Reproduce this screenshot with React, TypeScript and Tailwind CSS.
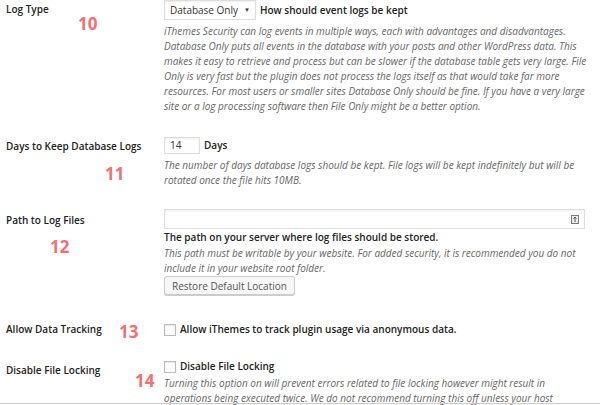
import React from 'react';

const font = { fontFamily: '"Open Sans", "Noto Sans", sans-serif' };

const Mark: React.FC<{ n: string; className: string }> = ({ n, className }) => (
  <span className={`absolute text-[17px] font-bold leading-none text-[#f36f73] ${className}`}>{n}</span>
);

const Row: React.FC<{ label: string; className?: string; children: React.ReactNode }> = ({ label, className = '', children }) => (
  <div className={`flex ${className}`}>
    <div className="w-[164px] shrink-0 pl-[6px] text-[10px] font-semibold leading-[15px] text-[#222]">{label}</div>
    <div className="flex-1 pr-[12px]">{children}</div>
  </div>
);

const Desc: React.FC<{ children: React.ReactNode }> = ({ children }) => (
  <p className="text-[10px] italic leading-[15px] text-[#666]">{children}</p>
);

const Check = () => <span className="mr-[4px] inline-block h-[12px] w-[12px] shrink-0 border border-[#bbb] bg-white shadow-[inset_0_1px_2px_rgba(0,0,0,0.1)]" />;

export default function App() {
  return (
    <div className="relative h-[405px] w-[600px] overflow-hidden bg-white text-[#333]" style={font}>
      <Mark n="10" className="left-[78px] top-[15px]" />
      <Mark n="11" className="left-[105px] top-[165px]" />
      <Mark n="12" className="left-[50px] top-[238px]" />
      <Mark n="13" className="left-[119px] top-[323px]" />
      <Mark n="14" className="left-[135px] top-[372px]" />

      <Row label="Log Type" className="pt-[2px]">
        <div className="-mt-[2px] flex items-center">
          <div className="flex h-[20px] w-[92px] items-center justify-between border border-[#ddd] bg-white pl-[5px] pr-[5px] text-[10px] text-[#333] shadow-[inset_0_1px_2px_rgba(0,0,0,0.07)]">
            <span>Database Only</span>
            <span className="text-[6px]">▼</span>
          </div>
          <span className="ml-[4px] text-[10px] font-semibold text-[#222]">How should event logs be kept</span>
        </div>
        <div className="mt-[4px]">
          <Desc>
            iThemes Security can log events in multiple ways, each with advantages and disadvantages. Database Only puts all events in the database with your posts and other WordPress data. This makes it easy to retrieve and process but can be slower if the database table gets very large. File Only is very fast but the plugin does not process the logs itself as that would take far more resources. For most users or smaller sites Database Only should be fine. If you have a very large site or a log processing software then File Only might be a better option.
          </Desc>
        </div>
      </Row>

      <Row label="Days to Keep Database Logs" className="mt-[25px]">
        <div className="-mt-[2px] flex items-center">
          <div className="flex h-[17px] w-[36px] items-center border border-[#ddd] bg-white pl-[5px] text-[10px] text-[#333] shadow-[inset_0_1px_2px_rgba(0,0,0,0.07)]">14</div>
          <span className="ml-[4px] text-[10px] font-semibold text-[#222]">Days</span>
        </div>
        <div className="mt-[4px]">
          <Desc>The number of days database logs should be kept. File logs will be kept indefinitely but will be rotated once the file hits 10MB.</Desc>
        </div>
      </Row>

      <Row label="Path to Log Files" className="mt-[25px]">
        <div className="-mt-[4px] flex h-[20px] w-[421px] items-center justify-end border border-[#ddd] bg-white pr-[5px] shadow-[inset_0_1px_2px_rgba(0,0,0,0.07)]">
          <svg width="8" height="9" viewBox="0 0 8 9">
            <rect x="0.5" y="0.5" width="7" height="8" fill="#eee" stroke="#777" />
            <path d="M4 2 L4 7 M2.5 3.5 L4 2 L5.5 3.5" stroke="#555" strokeWidth="1" fill="none" />
          </svg>
        </div>
        <div className="mt-[1px] text-[10px] font-semibold leading-[15px] text-[#222]">The path on your server where log files should be stored.</div>
        <div className="mt-[1px]">
          <Desc>This path must be writable by your website. For added security, it is recommended you do not include it in your website root folder.</Desc>
        </div>
        <button className="mt-0 block h-[19px] rounded-[3px] border border-[#ccc] bg-[#f7f7f7] px-[7px] text-[10px] leading-none text-[#555] shadow-[0_1px_0_#ccc]">
          Restore Default Location
        </button>
      </Row>

      <Row label="Allow Data Tracking" className="mt-[27px]">
        <div className="flex items-center text-[10px] font-semibold leading-[15px] text-[#222]">
          <Check />
          <span>Allow iThemes to track plugin usage via anonymous data.</span>
        </div>
      </Row>

      <Row label="Disable File Locking" className="mt-[26px]">
        <div className="-mt-[4px] flex items-center text-[10px] font-semibold leading-[15px] text-[#222]">
          <Check />
          <span>Disable File Locking</span>
        </div>
        <div className="mt-[2px]">
          <Desc>Turning this option on will prevent errors related to file locking however might result in operations being executed twice. We do not recommend turning this off unless your host</Desc>
        </div>
      </Row>

      <div className="absolute bottom-[1px] left-0 h-px w-full bg-[#ccc]" />
    </div>
  );
}
